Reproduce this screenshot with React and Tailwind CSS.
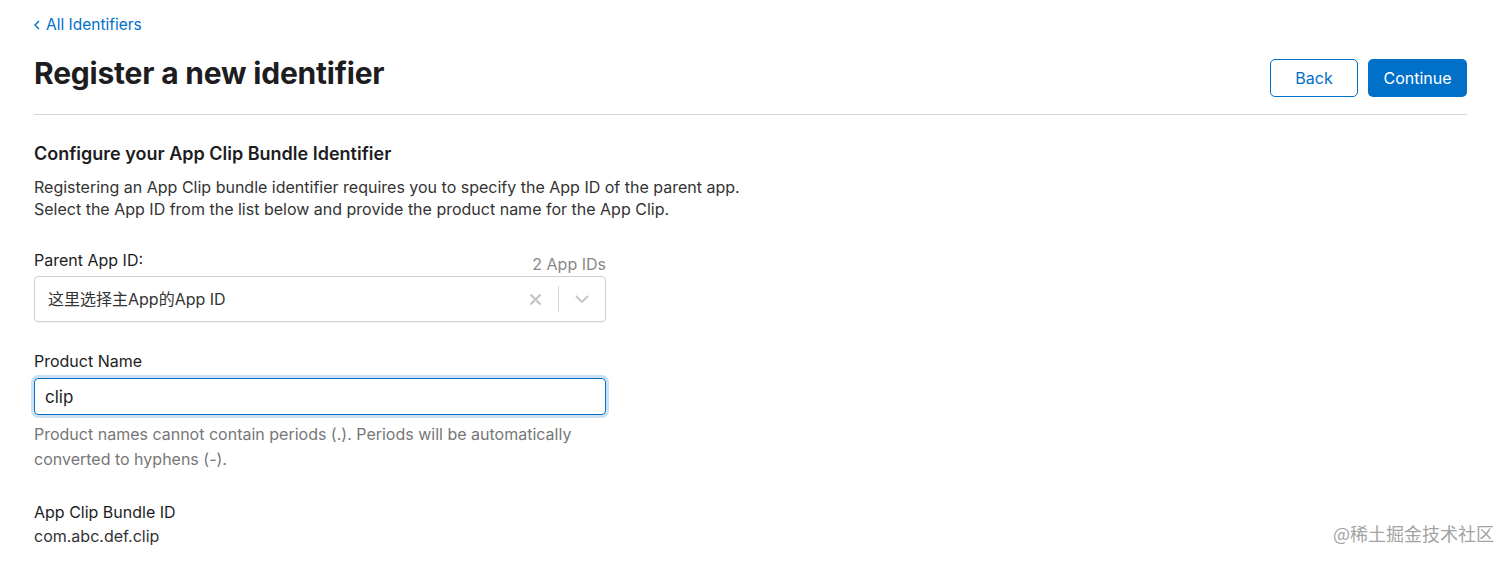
import React, { useState } from "react";

const RegisterIdentifier = () => {
  const [productName, setProductName] = useState("clip");

  return (
    <div className="relative w-full h-[562px] bg-white font-['Inter','Noto_Sans_CJK_SC',sans-serif] text-[#1d1d1f] overflow-hidden">
      <div className="pl-[34px] pr-[45px] pt-[14px]">
        {/* Back link */}
        <a href="#" className="text-[15.5px] text-[#0070c9] flex items-center gap-[6px] leading-[22px]">
          <svg width="6" height="10" viewBox="0 0 6 10" fill="none">
            <path d="M5 1L1 5l4 4" stroke="#0070c9" strokeWidth="1.4" />
          </svg>
          All Identifiers
        </a>

        {/* Header */}
        <div className="flex items-end justify-between border-b border-[#d6d6d6] pb-[16px] mt-[21px]">
          <h1 className="text-[30px] font-bold leading-[32px] tracking-[-0.2px] mb-[9px]">
            Register a new identifier
          </h1>
          <div className="flex gap-[10px] mb-[1px]">
            <button className="w-[88px] h-[38px] rounded-[5px] border border-[#0070c9] text-[#0070c9] text-[16px]">
              Back
            </button>
            <button className="w-[99px] h-[38px] rounded-[5px] bg-[#0070c9] text-white text-[16px]">
              Continue
            </button>
          </div>
        </div>

        {/* Configure section */}
        <h2 className="text-[18px] font-semibold mt-[27px] leading-[24px]">
          Configure your App Clip Bundle Identifier
        </h2>
        <p className="text-[16px] leading-[22px] text-[#333] mt-[10px]">
          Registering an App Clip bundle identifier requires you to specify the App ID of the parent app.
          <br />
          Select the App ID from the list below and provide the product name for the App Clip.
        </p>

        {/* Parent App ID */}
        <div className="w-[572px] mt-[29px]">
          <div className="flex justify-between items-end">
            <label className="text-[16px] leading-[22px]">Parent App ID:</label>
            <span className="text-[16px] text-[#888] leading-[20px] translate-y-[3px]">2 App IDs</span>
          </div>
          <div className="mt-[5px] h-[46px] border border-[#cfcfcf] rounded-[4px] flex items-center pl-[13px] shadow-[0_1px_1px_rgba(0,0,0,0.04)]">
            <span className="flex-1 text-[16px] text-[#333]">这里选择主App的App ID</span>
            <svg width="13" height="13" viewBox="0 0 13 13" className="mr-[16px]">
              <path d="M1.5 1.5l10 10M11.5 1.5l-10 10" stroke="#c4c4c4" strokeWidth="2.2" />
            </svg>
            <div className="w-px h-[26px] bg-[#d6d6d6]" />
            <svg width="14" height="8" viewBox="0 0 14 8" className="mx-[16px]">
              <path d="M1 1l6 6 6-6" stroke="#c4c4c4" strokeWidth="1.8" fill="none" />
            </svg>
          </div>
        </div>

        {/* Product name */}
        <div className="w-[572px] mt-[28px]">
          <label className="block text-[16px] leading-[22px]">Product Name</label>
          <input
            className="mt-[6px] w-full h-[37px] border border-[#0070c9] rounded-[4px] px-[10px] text-[17px] outline-none ring-[3px] ring-[#0070c9]/20"
            value={productName}
            onChange={(e) => setProductName(e.target.value)}
          />
          <p className="text-[16px] leading-[25px] text-[#777] mt-[7px] w-[560px]">
            Product names cannot contain periods (.). Periods will be automatically converted to hyphens (-).
          </p>
        </div>

        {/* Bundle ID */}
        <div className="mt-[28px]">
          <div className="text-[16px] leading-[24px]">App Clip Bundle ID</div>
          <div className="text-[16px] leading-[24px] text-[#333]">com.abc.def.clip</div>
        </div>
      </div>

      {/* Watermark */}
      <div className="absolute right-[18px] bottom-[15px] text-[18px] text-[#a3a3a3] font-['Noto_Sans_CJK_SC',sans-serif]">
        @稀土掘金技术社区
      </div>
    </div>
  );
};

export default RegisterIdentifier;
